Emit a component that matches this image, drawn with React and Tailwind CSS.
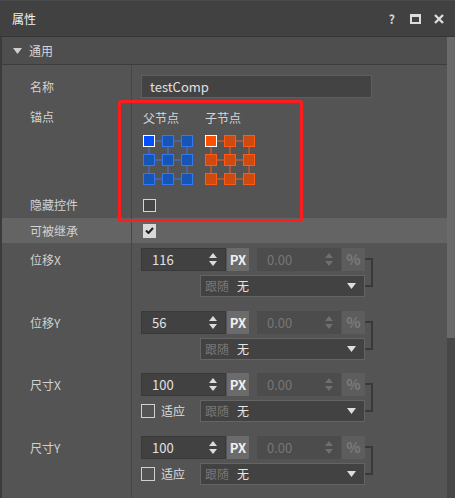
import React from "react";

const FONT = "font-['Noto_Sans_CJK_SC','Noto_Sans',sans-serif]";

function Spinner({ dim }) {
  const c = dim ? "#6f6f6f" : "#dcdcdc";
  return (
    <svg width="8" height="14" viewBox="0 0 8 14">
      <path d="M4 0 L8 5 L0 5 Z" fill={c} />
      <path d="M0 8 L8 8 L4 13 Z" fill={c} />
    </svg>
  );
}

function Grid({ fill, stroke, selFill }) {
  const pos = [0, 19, 38];
  return (
    <svg width="50" height="50" viewBox="0 0 50 50">
      {pos.map((p) => (
        <g key={"l" + p}>
          <line x1="6" y1={p + 6} x2="44" y2={p + 6} stroke={stroke} strokeWidth="1" />
          <line x1={p + 6} y1="6" x2={p + 6} y2="44" stroke={stroke} strokeWidth="1" />
        </g>
      ))}
      {pos.map((y) =>
        pos.map((x) => {
          const sel = x === 0 && y === 0;
          return (
            <rect
              key={x + "-" + y}
              x={x + 0.5}
              y={y + 0.5}
              width="11"
              height="11"
              fill={sel ? selFill : fill}
              stroke={sel ? "#ffffff" : stroke}
              strokeWidth="1"
            />
          );
        })
      )}
    </svg>
  );
}

function Label({ children, className = "" }) {
  return (
    <div className={"w-[130px] shrink-0 border-r border-[#454545] pl-[28px] text-[12px] text-[#d2d2d2] " + className}>
      {children}
    </div>
  );
}

function NumRow({ value, fit }) {
  return (
    <div className="flex">
      <div className="flex flex-col">
        <div className="flex h-[23px]">
          <div className="w-[85px] h-[23px] bg-[#414141] border border-[#393939] flex items-center justify-between pl-[10px] pr-[8px]">
            <span className="text-[13px] text-[#e2e2e2]">{value}</span>
            <Spinner />
          </div>
          <div className="ml-[1px] w-[22px] h-[23px] bg-[#6b6b6b] flex items-center justify-center text-[13px] font-bold text-[#f0f0f0]">
            PX
          </div>
          <div className="ml-[8px] w-[84px] h-[23px] bg-[#4c4c4c] flex items-center justify-between pl-[10px] pr-[8px]">
            <span className="text-[13px] text-[#767676]">0.00</span>
            <Spinner dim />
          </div>
          <div className="ml-[1px] w-[23px] h-[23px] bg-[#5d5d5d] flex items-center justify-center text-[15px] font-bold text-[#7a7a7a]">
            %
          </div>
        </div>
        <div className="flex items-center mt-[4px] h-[22px]">
          {fit ? (
            <div className="w-[59px] flex items-center">
              <div className="w-[14px] h-[14px] border-[1.5px] border-[#d0d0d0]" />
              <span className="ml-[6px] text-[12px] text-[#dedede]">适应</span>
            </div>
          ) : (
            <div className="w-[59px]" />
          )}
          <div className="w-[165px] h-[22px] bg-[#424242] border border-[#646464] flex items-center pl-[4px] pr-[8px]">
            <span className="text-[12px] text-[#777777]">跟随</span>
            <span className="ml-[8px] text-[12px] text-[#e4e4e4]">无</span>
            <svg className="ml-auto" width="9" height="6" viewBox="0 0 9 6">
              <path d="M0 0 L9 0 L4.5 6 Z" fill="#dedede" />
            </svg>
          </div>
        </div>
      </div>
      <div className="mt-[10px] w-[8px] h-[29px] border-2 border-l-0 border-[#393939]" />
    </div>
  );
}

export default function App() {
  return (
    <div className={"w-[455px] h-[498px] bg-[#545454] flex flex-col overflow-hidden relative " + FONT}>
      {/* title bar */}
      <div className="h-[37px] shrink-0 bg-[#414141] border-t border-[#4a4a4a] border-b border-b-[#353535] flex items-center pl-[12px] pr-[11px]">
        <span className="text-[12px] text-[#f2f2f2]">属性</span>
        <div className="ml-auto flex items-center">
          <span className="text-[12px] font-bold text-[#d8d8d8] leading-none">?</span>
          <div className="ml-[15px] w-[11px] h-[10px] border-2 border-t-[3px] border-[#dcdcdc]" />
          <svg className="ml-[13px]" width="10" height="10" viewBox="0 0 10 10">
            <path d="M1 1 L9 9 M9 1 L1 9" stroke="#dcdcdc" strokeWidth="2.4" />
          </svg>
        </div>
      </div>

      <div className="flex-1 flex border-l-2 border-[#3b3b3b]">
        <div className="flex-1 flex flex-col">
          {/* section header */}
          <div className="h-[28px] shrink-0 bg-[#4e4e4e] border-b border-[#3d3d3d] flex items-center pl-[11px]">
            <svg width="9" height="6" viewBox="0 0 9 6">
              <path d="M0 0 L9 0 L4.5 6 Z" fill="#cfcfcf" />
            </svg>
            <span className="ml-[7px] text-[12px] text-[#d6d6d6]">通用</span>
          </div>

          {/* 名称 */}
          <div className="flex h-[38px]">
            <Label className="pt-[10px]">
              <div className="h-[23px] flex items-center">名称</div>
            </Label>
            <div className="flex-1 pl-[9px] pt-[10px]">
              <div className="w-[231px] h-[23px] bg-[#434343] border border-[#5e5e5e] flex items-center pl-[8px] text-[13px] text-[#e0e0e0]">
                testComp
              </div>
            </div>
          </div>

          {/* 锚点 */}
          <div className="flex h-[89px]">
            <Label className="pt-[5px]">
              <div className="h-[18px] flex items-center">锚点</div>
            </Label>
            <div className="flex-1 pl-[11px] pt-[6px] flex gap-[12px]">
              <div className="flex flex-col">
                <div className="h-[18px] flex items-center text-[12px] text-[#d6d6d6]">父节点</div>
                <div className="mt-[8px]">
                  <Grid fill="#1655b6" stroke="#3477ee" selFill="#0050ff" />
                </div>
              </div>
              <div className="flex flex-col">
                <div className="h-[18px] flex items-center text-[12px] text-[#d6d6d6]">子节点</div>
                <div className="mt-[8px]">
                  <Grid fill="#cf4a0e" stroke="#ff5a16" selFill="#ff5000" />
                </div>
              </div>
            </div>
          </div>

          {/* 隐藏控件 */}
          <div className="flex h-[26px]">
            <Label className="flex items-center">隐藏控件</Label>
            <div className="flex-1 pl-[11px] flex items-center">
              <div className="w-[13px] h-[13px] border border-[#d4d4d4] bg-[#464646]" />
            </div>
          </div>

          {/* 可被继承 */}
          <div className="flex h-[25px] bg-[#646464]">
            <Label className="flex items-center">可被继承</Label>
            <div className="flex-1 pl-[11px] flex items-center">
              <div className="w-[13px] h-[14px] bg-[#d9d9d9] flex items-center justify-center">
                <svg width="9" height="7" viewBox="0 0 9 7">
                  <path d="M1 3.5 L3.5 6 L8 1" stroke="#1e1e1e" strokeWidth="2" fill="none" />
                </svg>
              </div>
            </div>
          </div>

          {/* 位移X */}
          <div className="flex h-[63px]">
            <Label className="pt-[5px]">
              <div className="h-[23px] flex items-center">位移X</div>
            </Label>
            <div className="flex-1 pl-[9px] pt-[5px]">
              <NumRow value="116" />
            </div>
          </div>

          {/* 位移Y */}
          <div className="flex h-[62px]">
            <Label className="pt-[5px]">
              <div className="h-[23px] flex items-center">位移Y</div>
            </Label>
            <div className="flex-1 pl-[9px] pt-[5px]">
              <NumRow value="56" />
            </div>
          </div>

          {/* 尺寸X */}
          <div className="flex h-[63px]">
            <Label className="pt-[5px]">
              <div className="h-[23px] flex items-center">尺寸X</div>
            </Label>
            <div className="flex-1 pl-[9px] pt-[5px]">
              <NumRow value="100" fit />
            </div>
          </div>

          {/* 尺寸Y */}
          <div className="flex flex-1">
            <Label className="pt-[5px]">
              <div className="h-[23px] flex items-center">尺寸Y</div>
            </Label>
            <div className="flex-1 pl-[9px] pt-[5px]">
              <NumRow value="100" fit />
            </div>
          </div>
        </div>

        {/* scrollbar */}
        <div className="w-[8px] shrink-0 flex flex-col bg-[#474747]">
          <div className="h-[301px] bg-[#6a6a6a]" />
        </div>
      </div>

      {/* red annotation box */}
      <div className="absolute left-[118px] top-[100px] w-[185px] h-[122px] border-[3px] border-[#fc1e1e] rounded-[3px] pointer-events-none" />
    </div>
  );
}
